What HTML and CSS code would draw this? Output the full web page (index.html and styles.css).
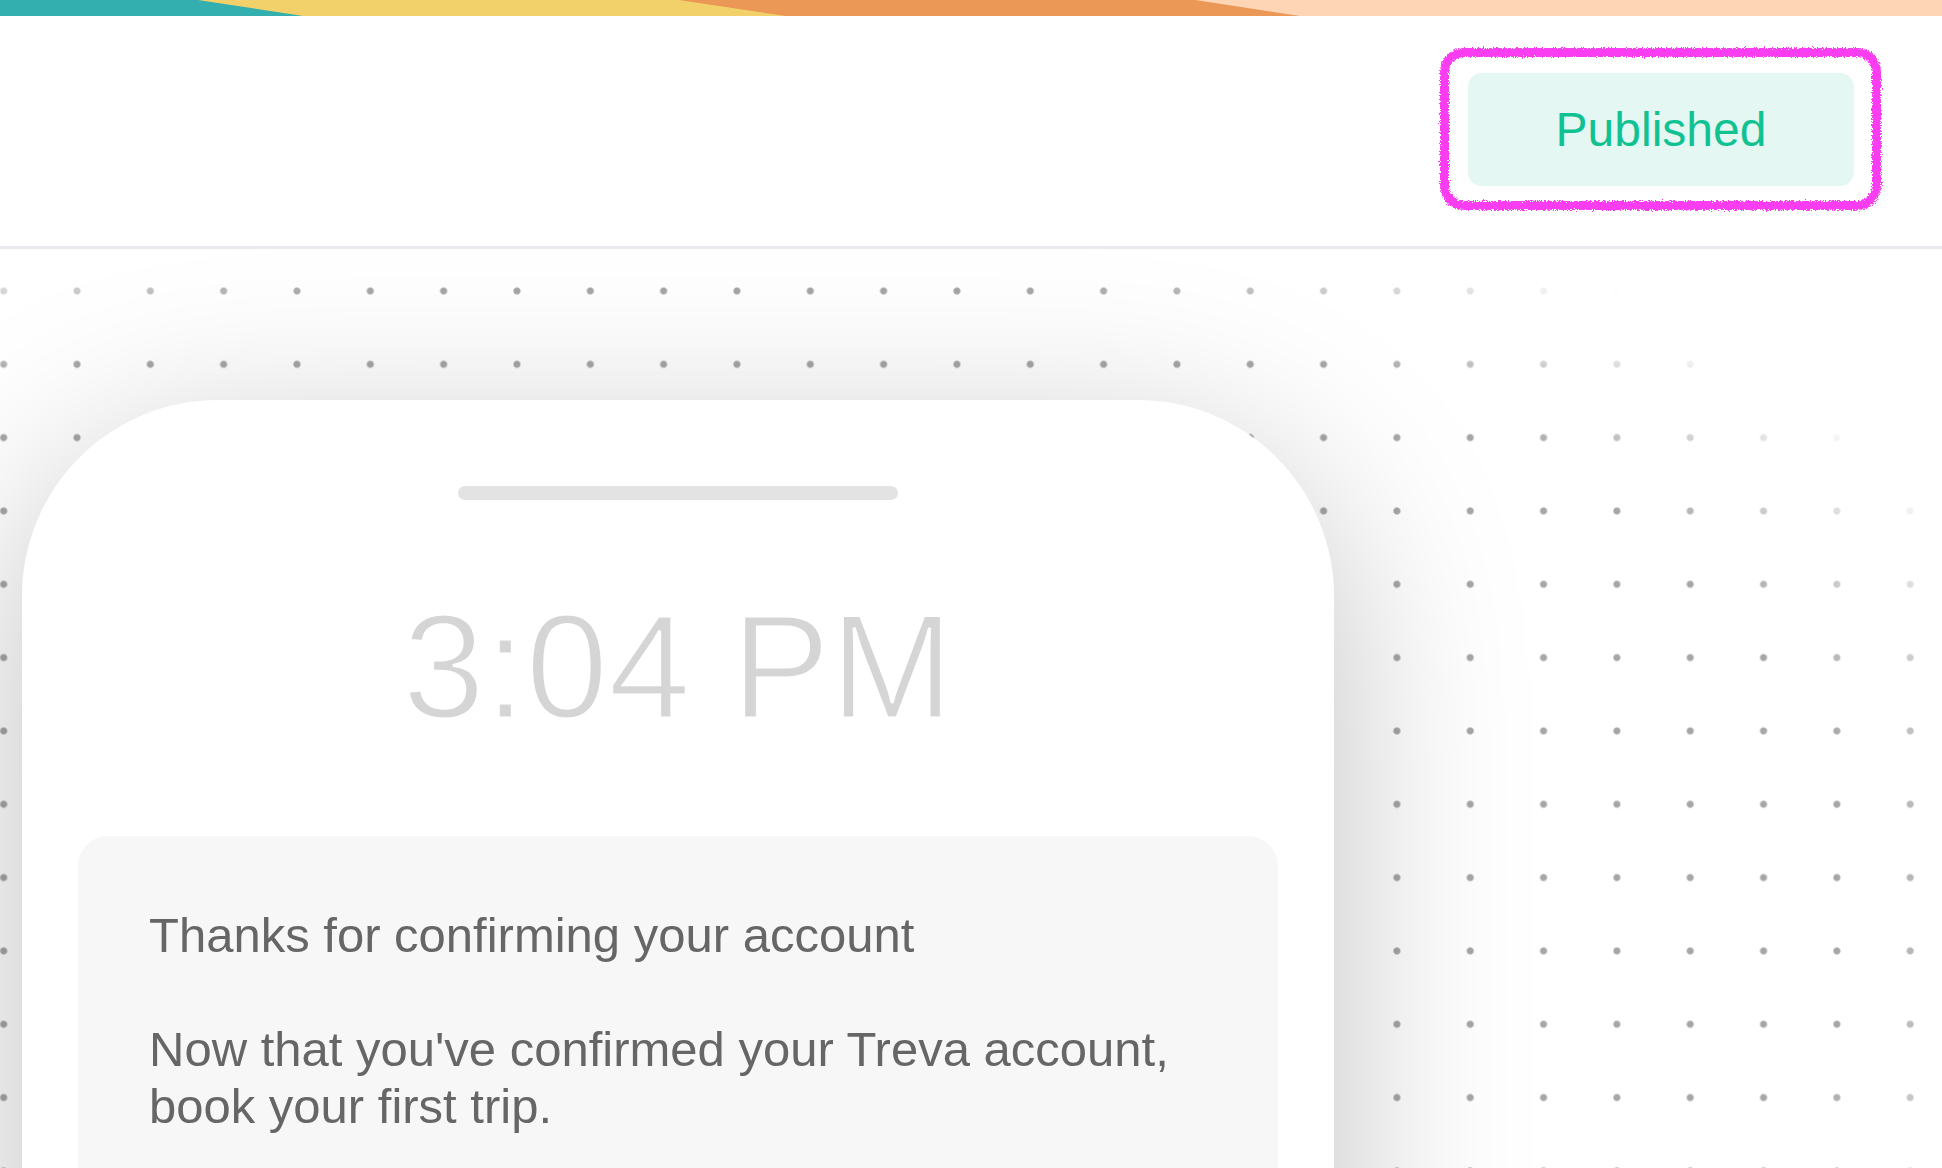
FILE: index.html
```html
<!DOCTYPE html>
<html lang="en">
<head>
<meta charset="utf-8">
<title>Message preview</title>
<link rel="stylesheet" href="styles.css">
</head>
<body>
<svg class="defs" width="0" height="0" aria-hidden="true">
  <filter id="rough" x="-5%" y="-10%" width="110%" height="120%">
    <feTurbulence type="fractalNoise" baseFrequency="0.9" numOctaves="2" seed="3" result="noise"/>
    <feDisplacementMap in="SourceGraphic" in2="noise" scale="6" xChannelSelector="R" yChannelSelector="G"/>
  </filter>
</svg>
<div class="app">
  <svg class="stripe" viewBox="0 0 1942 16" preserveAspectRatio="none" aria-hidden="true">
    <rect x="0" y="0" width="1942" height="16" fill="#fed6b6"/>
    <polygon points="0,0 1195,0 1300,16 0,16" fill="#eb9755"/>
    <polygon points="0,0 679,0 786,16 0,16" fill="#f2d16b"/>
    <polygon points="0,0 198,0 303,16 0,16" fill="#33afaf"/>
  </svg>
  <header class="topbar">
    <div class="status-wrap">
      <span class="status">Published</span>
      <span class="annot" aria-hidden="true"></span>
    </div>
  </header>
  <main class="canvas">
    <section class="phone">
      <div class="handle"></div>
      <div class="time">3:04 PM</div>
      <div class="message">
        <p>Thanks for confirming your account</p>
        <p>Now that you've confirmed your Treva account, book your first trip.</p>
      </div>
    </section>
  </main>
</div>
</body>
</html>
```
FILE: styles.css
```css
html, body {
  margin: 0;
  padding: 0;
  height: 100%;
  overflow: hidden;
  background: #ffffff;
  font-family: "Liberation Sans", Arial, sans-serif;
}

.defs {
  position: absolute;
  width: 0;
  height: 0;
}

.app {
  display: flex;
  flex-direction: column;
  height: 100%;
}

.stripe {
  display: block;
  width: 100%;
  height: 16px;
  flex: none;
}

.topbar {
  flex: none;
  box-sizing: border-box;
  height: 233px;
  border-bottom: 3px solid #e8eaee;
  display: flex;
  justify-content: flex-end;
  align-items: flex-start;
  padding: 57px 88px 0 0;
}

.status-wrap {
  position: relative;
}

.status {
  display: flex;
  align-items: center;
  justify-content: center;
  width: 386px;
  height: 113px;
  border-radius: 14px;
  background: #e5f7f2;
  color: #10c292;
  font-size: 48px;
  line-height: 1;
}

.annot {
  position: absolute;
  top: -25px;
  left: -28px;
  right: -27px;
  bottom: -24px;
  border: 9px solid #fb3ef2;
  border-radius: 24px;
  filter: url(#rough);
  pointer-events: none;
}

.canvas {
  flex: 1;
  position: relative;
  overflow: hidden;
  padding: 151px 0 0 22px;
}

.canvas::before {
  content: "";
  position: absolute;
  inset: 0;
  background-image: radial-gradient(circle at center, #a6a6a6 0, #a6a6a6 2.8px, rgba(166,166,166,0) 4.2px);
  background-size: 73.33px 73.33px;
  background-position: -33px 5.3px;
  -webkit-mask-image: radial-gradient(ellipse 1450px 790px at 700px 651px, #000 80%, rgba(0,0,0,0) 100%);
  mask-image: radial-gradient(ellipse 1450px 790px at 700px 651px, #000 80%, rgba(0,0,0,0) 100%);
}

.phone {
  position: relative;
  z-index: 1;
  width: 1312px;
  height: 1000px;
  background: #ffffff;
  border-radius: 196px 196px 0 0;
  box-shadow: 0 50px 190px rgba(0, 0, 0, 0.25);
  display: flex;
  flex-direction: column;
  align-items: center;
  padding-top: 86px;
  box-sizing: border-box;
}

.handle {
  width: 440px;
  height: 14px;
  border-radius: 7px;
  background: #e3e3e3;
  flex: none;
}

.time {
  margin-top: 93px;
  font-size: 148px;
  line-height: 148px;
  color: #d5d5d5;
  -webkit-text-stroke: 3px #ffffff;
  white-space: nowrap;
}

.message {
  margin-top: 95px;
  align-self: stretch;
  margin-left: 56px;
  margin-right: 56px;
  flex: 1;
  background: #f7f7f7;
  border-radius: 30px 30px 0 0;
  padding: 71px;
  color: #666666;
  font-size: 49px;
  line-height: 57px;
}

.message p {
  margin: 0 0 57px 0;
}
```
